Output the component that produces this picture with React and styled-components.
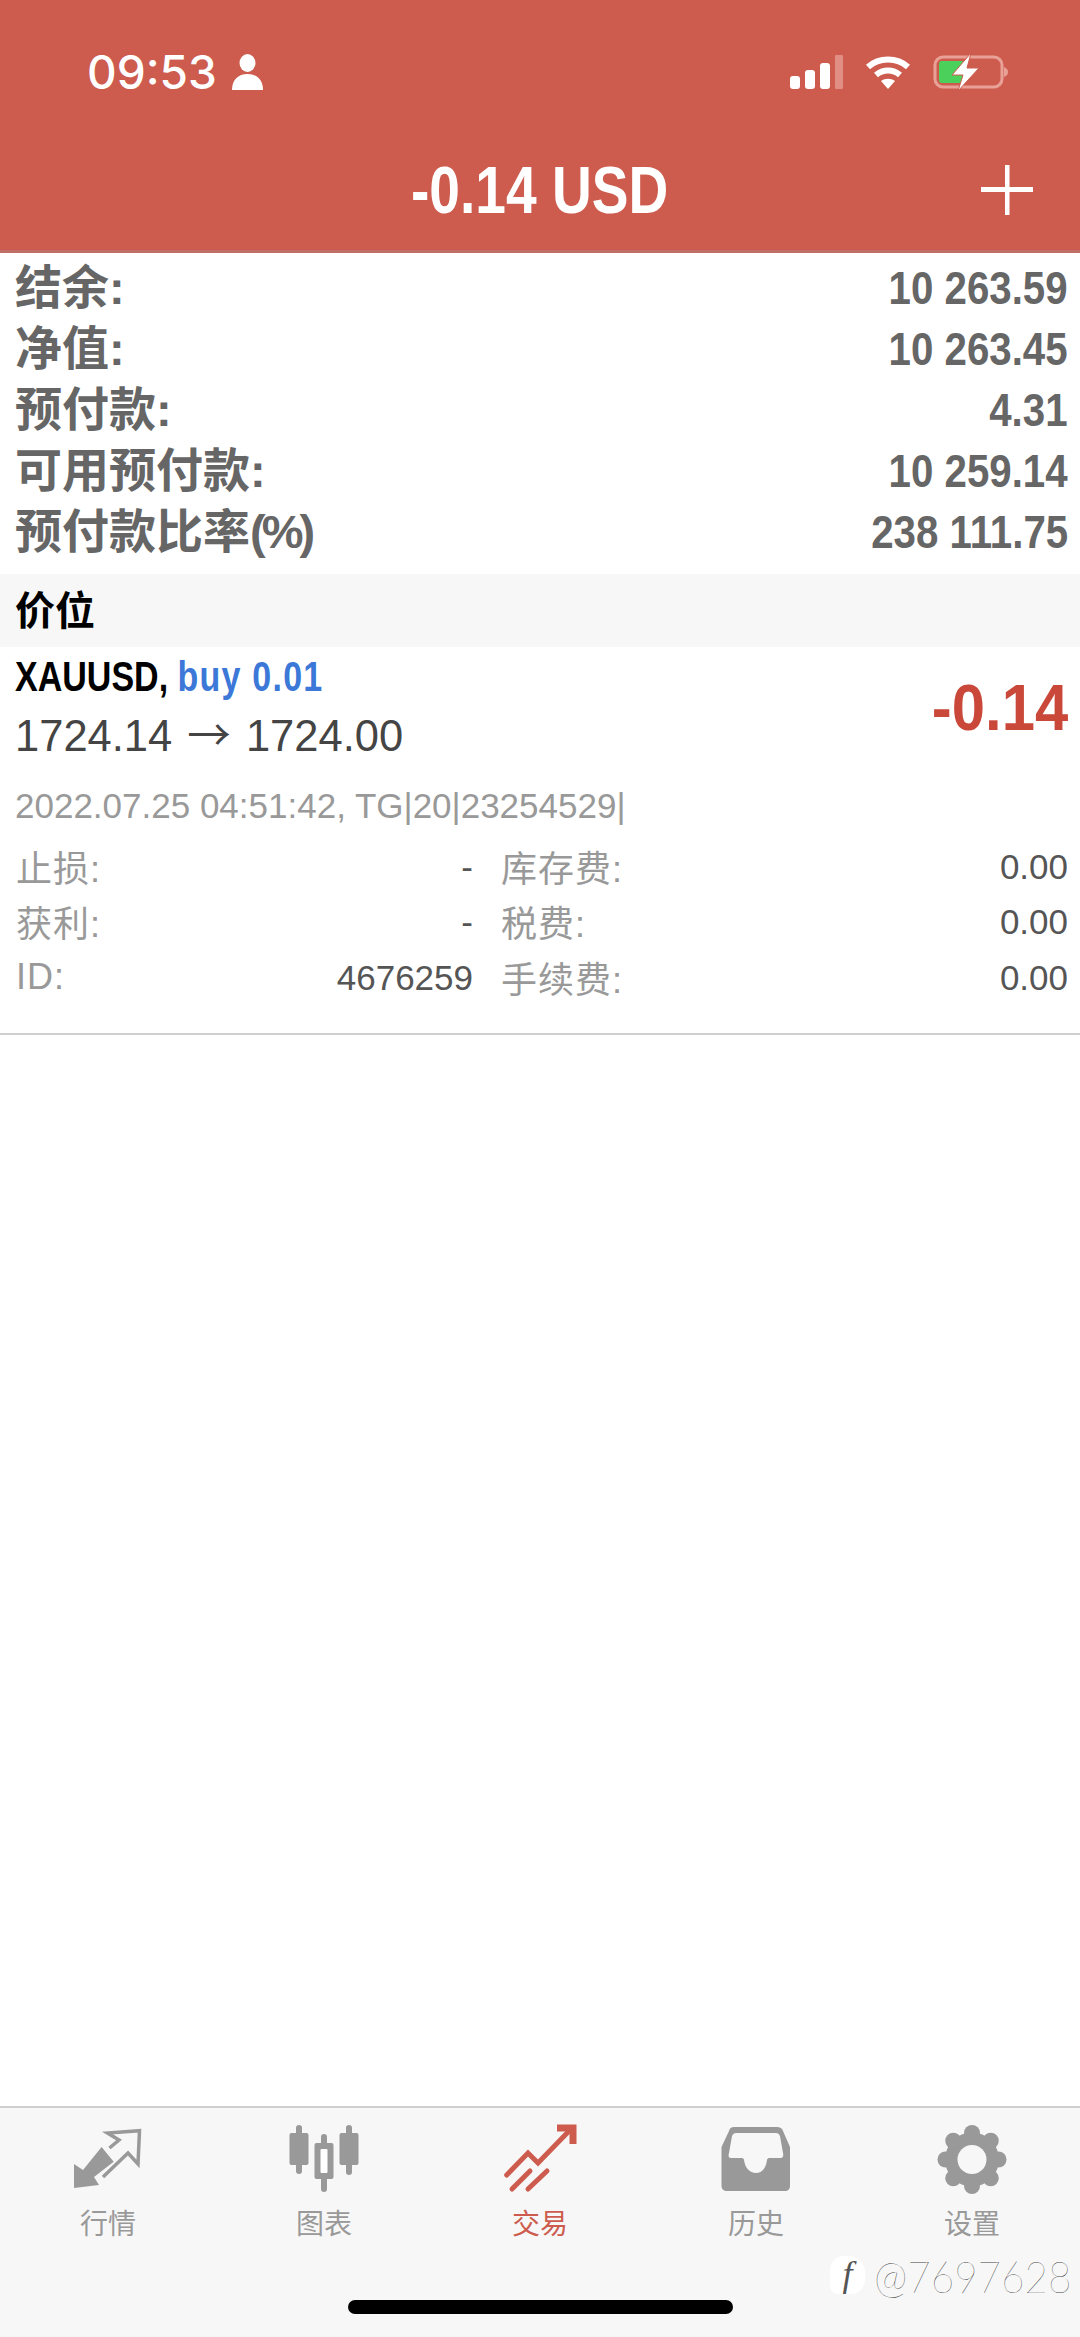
import React from "react";
import styled, { createGlobalStyle } from "styled-components";

const RED = "#cd5c4e";
const SANS = `"Liberation Sans", "Noto Sans CJK SC", sans-serif`;
const CJK = `"Noto Sans CJK SC", "Liberation Sans", sans-serif`;

const Global = createGlobalStyle`
  html, body { margin: 0; padding: 0; background: #fff; }
  * { box-sizing: border-box; }
`;

const Page = styled.div`
  width: 1080px;
  height: 2337px;
  position: relative;
  display: flex;
  flex-direction: column;
  overflow: hidden;
  font-family: ${SANS};
`;

const Header = styled.header`
  height: 253px;
  background: ${RED};
  border-bottom: 3px solid #bf6f66;
  padding: 50px 50px 0 87px;
  color: #fff;
`;
const StatusBar = styled.div`
  height: 44px;
  display: flex;
  align-items: center;
  justify-content: space-between;
`;
const Clock = styled.div`
  display: flex;
  align-items: center;
  gap: 15px;
  font-family: Inter, sans-serif;
  font-size: 46px;
  font-weight: 500;
  line-height: 44px;
`;
const StatusIcons = styled.div`
  display: flex;
  align-items: center;
  gap: 22px;
  margin-right: 21px;
`;
const TitleBar = styled.div`
  margin: 61px -3px 0 0;
  height: 70px;
  display: flex;
  align-items: center;
  justify-content: flex-end;
  position: relative;
`;
const Title = styled.div`
  position: absolute;
  left: 324px;
  top: 0;
  line-height: 70px;
  font-size: 66px;
  font-weight: 700;
  white-space: nowrap;
  transform: scaleX(0.835);
  transform-origin: left center;
`;

const Summary = styled.section`
  padding: 4px 12px 12px 15px;
`;
const SummaryRow = styled.div`
  height: 61px;
  display: flex;
  align-items: center;
  justify-content: space-between;
  color: #666;
`;
const SummaryLabel = styled.span`
  font-family: ${SANS};
  font-size: 47px;
  font-weight: 700;
  line-height: 61px;
  white-space: nowrap;
`;
const Percent = styled.span`
  letter-spacing: -4px;
`;
const Squeezed = styled.span`
  display: inline-block;
  white-space: nowrap;
  font-family: ${SANS};
  font-weight: 700;
  font-size: ${(p) => p.$size}px;
  transform: scaleX(${(p) => p.$x});
  transform-origin: ${(p) => p.$origin || "right"} center;
`;
const SectionHead = styled.div`
  height: 73px;
  background: #f7f7f7;
  padding-left: 15px;
  font-family: ${CJK};
  font-size: 40px;
  font-weight: 700;
  line-height: 68px;
  color: #000;
`;
const Main = styled.main`
  flex: 1;
`;

const Position = styled.article`
  height: 388px;
  padding: 1px 12px 0 15px;
  border-bottom: 2px solid #d0d0d0;
`;
const PositionTop = styled.div`
  display: flex;
  align-items: center;
  justify-content: space-between;
`;
const SymbolLine = styled.div`
  height: 58px;
  line-height: 58px;
  color: #000;
`;
const Buy = styled.span`
  color: #3b78d8;
  letter-spacing: 1.5px;
`;
const PriceLine = styled.div`
  height: 58px;
  margin-top: -2px;
  line-height: 58px;
  font-size: 43.5px;
  color: #444;
  white-space: nowrap;
`;
const PriceArrow = styled.span`
  font-family: ${CJK};
  margin: 0 3px;
`;
const Profit = styled.div`
  color: #c9483a;
  margin-top: 5px;
`;
const TimeLine = styled.div`
  margin-top: 19px;
  height: 50px;
  line-height: 50px;
  font-size: 35px;
  color: #999;
  white-space: nowrap;
`;
const Details = styled.div`
  display: grid;
  grid-template-columns: 458px 1fr;
  grid-auto-rows: 55.5px;
  column-gap: 27px;
  margin-top: 8px;
`;
const DetailCell = styled.div`
  display: flex;
  align-items: center;
  justify-content: space-between;
`;
const DetailLabel = styled.span`
  font-family: ${SANS};
  font-size: 36px;
  letter-spacing: 1px;
  margin-left: 1px;
  padding-bottom: 2px;
  color: #999;
`;
const DetailValue = styled.span`
  font-size: 35px;
  color: #555;
`;

const TabBar = styled.nav`
  height: 231px;
  background: #f7f7f7;
  border-top: 2px solid #cfcfcf;
  display: grid;
  grid-template-columns: repeat(5, 1fr);
  padding-top: 15px;
`;
const Tab = styled.div`
  display: flex;
  flex-direction: column;
  align-items: center;
  color: ${(p) => (p.$active ? RED : "#999")};
`;
const TabIcon = styled.svg`
  width: 80px;
  height: 76px;
  display: block;
`;
const TabLabel = styled.span`
  margin-top: 5px;
  font-family: ${CJK};
  font-size: 28px;
  line-height: 36px;
`;
const HomeBar = styled.div`
  position: absolute;
  left: 348px;
  top: 2300px;
  width: 385px;
  height: 14px;
  border-radius: 7px;
  background: #000;
`;
const Watermark = styled.div`
  position: absolute;
  left: 830px;
  top: 2255px;
  display: flex;
  align-items: center;
  gap: 8px;
`;
const WatermarkBadge = styled.div`
  width: 35px;
  height: 38px;
  border-radius: 14px 16px 14px 8px;
  background: #fff;
  color: #555;
  font-family: "Liberation Serif", serif;
  font-style: italic;
  font-size: 36px;
  line-height: 36px;
  text-align: center;
`;
const WatermarkText = styled.div`
  font-family: Lato, sans-serif;
  font-weight: 100;
  font-size: 44px;
  line-height: 40px;
  color: #fafafa;
  text-shadow: 1px 1px 0 #444;
  white-space: nowrap;
  transform: scaleX(0.92);
  transform-origin: left center;
`;

const PersonIcon = () => (
  <svg width="31" height="36" viewBox="0 0 31 36" fill="#fff">
    <ellipse cx="15.5" cy="9" rx="8" ry="9" />
    <path d="M0 36c0-10 6-16 15.5-16S31 26 31 36z" />
  </svg>
);

const Signal = () => (
  <svg width="53" height="34" viewBox="0 0 53 34" fill="#fff">
    <rect x="0" y="21" width="10" height="13" rx="3" />
    <rect x="15" y="15" width="10" height="19" rx="3" />
    <rect x="30" y="8" width="10" height="26" rx="3" />
    <rect x="45" y="0" width="8" height="34" rx="1" fill="#e18f85" />
  </svg>
);

const Wifi = () => (
  <svg width="46" height="34" viewBox="0 0 46 34" fill="none" stroke="#fff" strokeWidth="6">
    <path d="M3 12C14 2 32 2 43 12" />
    <path d="M11 20c7-6 17-6 24 0" />
    <path d="M16 26l7 8 7-8c-4-3-10-3-14 0z" fill="#fff" stroke="none" />
  </svg>
);

const Battery = () => (
  <svg width="76" height="38" viewBox="0 0 76 38">
    <rect x="2" y="4" width="67" height="30" rx="8" fill="none" stroke="#e9a097" strokeWidth="3" />
    <rect x="6" y="8" width="25" height="22" rx="3" fill="#4cd05c" />
    <path d="M71 14c3 1 4 3 4 5s-1 4-4 5z" fill="#e9a097" />
    <path d="M38 0L19 22h11l-5 16 21-23H34z" fill="#fff" stroke={RED} strokeWidth="1" />
  </svg>
);

const PlusIcon = () => (
  <svg width="52" height="50" viewBox="0 0 52 50" fill="#fff">
    <rect x="24" y="0" width="4.5" height="50" />
    <rect x="0" y="22" width="52" height="5" />
  </svg>
);

const MarketIcon = () => (
  <TabIcon viewBox="0 -2 80 76">
    <path d="M6 63V39l9 6 18.600-23 12.100 14.700L26 52l5 8z" fill="currentColor" />
    <path d="M41.500 23L51 15 39.500 8l32-2.300L70 39 60 28 35 52" fill="none" stroke="currentColor" strokeWidth="3.500" />
  </TabIcon>
);

const ChartIcon = () => (
  <TabIcon viewBox="0 0 80 76" fill="currentColor">
    <rect x="12" y="2" width="6" height="49" rx="3" />
    <rect x="5.500" y="10" width="19" height="32" rx="2" />
    <rect x="37" y="11" width="6" height="58" rx="3" />
    <rect x="30.500" y="20" width="19" height="36" rx="2" />
    <rect x="36.500" y="26" width="7" height="24" rx="1" fill="#fff" />
    <rect x="62" y="2" width="6" height="50" rx="3" />
    <rect x="55.500" y="10" width="19" height="32" rx="2" />
  </TabIcon>
);

const TradeIcon = () => (
  <TabIcon viewBox="0 0 80 76" fill="none" stroke="currentColor" strokeWidth="5" strokeLinecap="round">
    <path d="M6.700 52L28 30l10 10L70 7" />
    <path d="M57 5h16v16" strokeWidth="7" strokeLinecap="butt" />
    <path d="M12 66l18-18M28 66l19-18" />
  </TabIcon>
);

const HistoryIcon = () => (
  <TabIcon viewBox="0 0 80 76">
    <path
      d="M18 4H61C64 4 66 5 67 8L74 24V63C74 66 72 68 69 68H11C8 68 5.500 66 5.500 63V24L13 8C14 5 15 4 18 4Z"
      fill="currentColor"
    />
    <path
      d="M20 10H60C62 10 63 11 64 13L67 30C68 34 66 35 64 35H53C52 35 51 36 51 37C50 45 46 50 40 50C34 50 29 45 28 37C28 36 27 35 26 35H15C13 35 12 34 13 30L16 13C17 11 18 10 20 10Z"
      fill="#f7f7f7"
    />
  </TabIcon>
);

const GearIcon = () => {
  const lobes = [0, 45, 90, 135, 180, 225, 270, 315];
  return (
    <TabIcon viewBox="0 0 80 76" fill="currentColor">
      <circle cx="40" cy="36.500" r="27" />
      {lobes.map((a) => (
        <circle
          key={a}
          cx={40 + 26.5 * Math.cos((a * Math.PI) / 180)}
          cy={36.5 + 26.5 * Math.sin((a * Math.PI) / 180)}
          r="8"
        />
      ))}
      <circle cx="40" cy="36.500" r="14.500" fill="#f7f7f7" />
    </TabIcon>
  );
};

const summary = [
  ["结余:", "10 263.59"],
  ["净值:", "10 263.45"],
  ["预付款:", "4.31"],
  ["可用预付款:", "10 259.14"],
  [
    <>
      预付款比率<Percent>(%)</Percent>
    </>,
    "238 111.75",
  ],
];

const details = [
  ["止损:", "-"],
  ["库存费:", "0.00"],
  ["获利:", "-"],
  ["税费:", "0.00"],
  ["ID:", "4676259"],
  ["手续费:", "0.00"],
];

const tabs = [
  ["行情", MarketIcon],
  ["图表", ChartIcon],
  ["交易", TradeIcon, true],
  ["历史", HistoryIcon],
  ["设置", GearIcon],
];

export default function App() {
  return (
    <Page>
      <Global />
      <Header>
        <StatusBar>
          <Clock>
            09:53
            <PersonIcon />
          </Clock>
          <StatusIcons>
            <Signal />
            <Wifi />
            <Battery />
          </StatusIcons>
        </StatusBar>
        <TitleBar>
          <Title>-0.14 USD</Title>
          <PlusIcon />
        </TitleBar>
      </Header>
      <Main>
        <Summary>
          {summary.map(([label, value]) => (
            <SummaryRow key={value}>
              <SummaryLabel>{label}</SummaryLabel>
              <Squeezed $size={46} $x={0.875}>
                {value}
              </Squeezed>
            </SummaryRow>
          ))}
        </Summary>
        <SectionHead>价位</SectionHead>
        <Position>
          <PositionTop>
            <div>
              <SymbolLine>
                <Squeezed $size={42} $x={0.81} $origin="left">
                  XAUUSD, <Buy>buy 0.01</Buy>
                </Squeezed>
              </SymbolLine>
              <PriceLine>
                1724.14 <PriceArrow>→</PriceArrow> 1724.00
              </PriceLine>
            </div>
            <Profit>
              <Squeezed $size={65} $x={0.92}>
                -0.14
              </Squeezed>
            </Profit>
          </PositionTop>
          <TimeLine>2022.07.25 04:51:42, TG|20|23254529|</TimeLine>
          <Details>
            {details.map(([label, value]) => (
              <DetailCell key={label}>
                <DetailLabel>{label}</DetailLabel>
                <DetailValue>{value}</DetailValue>
              </DetailCell>
            ))}
          </Details>
        </Position>
      </Main>
      <TabBar>
        {tabs.map(([label, Icon, active]) => (
          <Tab key={label} $active={active}>
            <Icon />
            <TabLabel>{label}</TabLabel>
          </Tab>
        ))}
      </TabBar>
      <HomeBar />
      <Watermark>
        <WatermarkBadge>f</WatermarkBadge>
        <WatermarkText>@7697628</WatermarkText>
      </Watermark>
    </Page>
  );
}
